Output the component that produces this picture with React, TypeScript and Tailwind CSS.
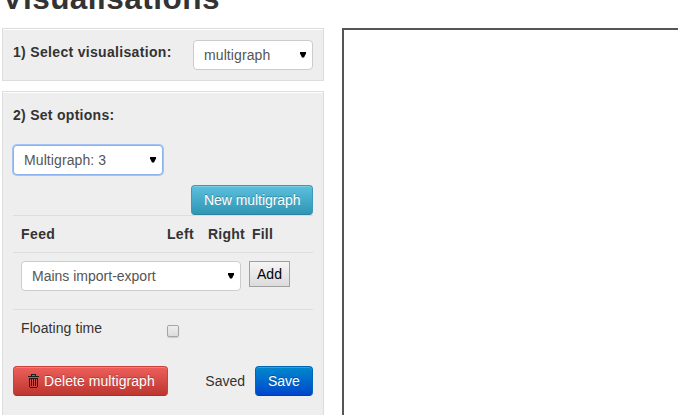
import type { ReactNode } from "react";

function Arrow() {
  return (
    <svg width="6" height="6" viewBox="0 0 6 6" className="shrink-0" fill="#000">
      <path d="M0 0H6V1.5L4 5.5H2L0 1.5Z" />
    </svg>
  );
}

function Select({ label, className }: { label: string; className: string }) {
  return (
    <button
      className={`flex h-[30px] items-center justify-between rounded border bg-white pr-[6px] pl-[10px] text-left text-[#555] ${className}`}
    >
      <span>{label}</span>
      <Arrow />
    </button>
  );
}

function Button({ children, className }: { children: ReactNode; className: string }) {
  return (
    <button
      className={`flex h-[30px] items-center rounded border bg-linear-to-b pl-[12px] whitespace-nowrap text-white inset-shadow-[0_1px_0_rgba(255,255,255,0.2)] text-shadow-[0_-1px_0_rgba(0,0,0,0.25)] ${className}`}
    >
      {children}
    </button>
  );
}

function Trash() {
  return (
    <svg width="11" height="14" viewBox="0 0 11 14" className="mr-[5px] ml-[2px] shrink-0" fill="none" stroke="#1d1d1d" shapeRendering="crispEdges">
      <path d="M3.5 2V0.5H7.5V2M0 2.5H11M1.5 4V13M9.5 4V13M1 4.5H10M2 13.5H9M3.5 5V12M5.5 5V12M7.5 5V12" />
    </svg>
  );
}

export default function App() {
  return (
    <div className="h-[415px] w-[678px] overflow-hidden bg-white font-['Liberation_Sans',Arial,sans-serif] text-[14px] leading-5 text-[#333]">
      <h2 className="-mt-[22px] h-[50px] pl-[2px] text-[31.5px] leading-[40px] font-bold tracking-[0.48px]">Visualisations</h2>
      <div className="flex">
        <div className="ml-[2px] w-[322px] shrink-0">
          <section className="flex h-[53px] justify-between border border-[#ddd] bg-[#eee] px-[10px] pt-[11px] inset-shadow-[0_1px_0_#fff]">
            <b className="mt-[2px] tracking-[0.32px]">1) Select visualisation:</b>
            <Select label="multigraph" className="w-[120px] border-[#ccc] tracking-[0.1px]" />
          </section>
          <section className="mt-[10px] h-[340px] border border-[#ddd] bg-[#eee] px-[10px] pt-[13px] inset-shadow-[0_1px_0_#fff]">
            <b className="block tracking-[0.28px]">2) Set options:</b>
            <Select
              label="Multigraph: 3"
              className="mt-[20px] w-[150px] border-[#8db2ec] tracking-[0.1px] ring-1 ring-[#a3c3f7]"
            />
            <div className="mt-[10px] flex justify-end">
              <Button className="w-[122px] border-[#3a9ab7] border-b-[#2b83a0] from-[#5bc0de] to-[#2f96b4] tracking-[-0.05px]">New multigraph</Button>
            </div>
            <div className="grid h-[37px] grid-cols-[146px_41px_44px_1fr] border-t border-[#ddd] pt-[8px] pl-[8px] font-bold">
              <span className="tracking-[0.4px]">Feed</span>
              <span className="tracking-[0.3px]">Left</span>
              <span className="tracking-[0.2px]">Right</span>
              <span className="tracking-[0.2px]">Fill</span>
            </div>
            <div className="flex h-[57px] items-start gap-[8px] border-t border-[#ddd] pt-[8px] pl-[8px]">
              <Select label="Mains import-export" className="w-[220px] border-[#ccc]" />
              <button className="h-[26px] w-[41px] border border-[#a0a0a0] bg-linear-to-b from-[#f5f5f5] to-[#dcdcdc] leading-[22px] text-black">
                Add
              </button>
            </div>
            <div className="flex h-[57px] items-start border-t border-[#ddd] pt-[8px] pl-[8px]">
              <span className="w-[146px] tracking-[0.08px]">Floating time</span>
              <span className="mt-[7px] size-[12px] rounded-[2px] border border-[#a5a5a5] bg-linear-to-b from-[#eee] to-[#dcdcdc] shadow-[0_1px_1px_#ccc]" />
            </div>
            <div className="flex items-center">
              <Button className="w-[155px] border-[#c9423d] border-b-[#a6302b] from-[#ee5f5b] to-[#bd362f] tracking-[0.06px]">
                <Trash />
                Delete multigraph
              </Button>
              <span className="ml-auto">Saved</span>
              <Button className="ml-[10px] w-[58px] border-[#0067b5] border-b-[#003db3] from-[#0088cc] to-[#0044cc]">Save</Button>
            </div>
          </section>
        </div>
        <main className="ml-[18px] h-[400px] flex-1 border-t-2 border-l-2 border-[#555] bg-white" />
      </div>
    </div>
  );
}
